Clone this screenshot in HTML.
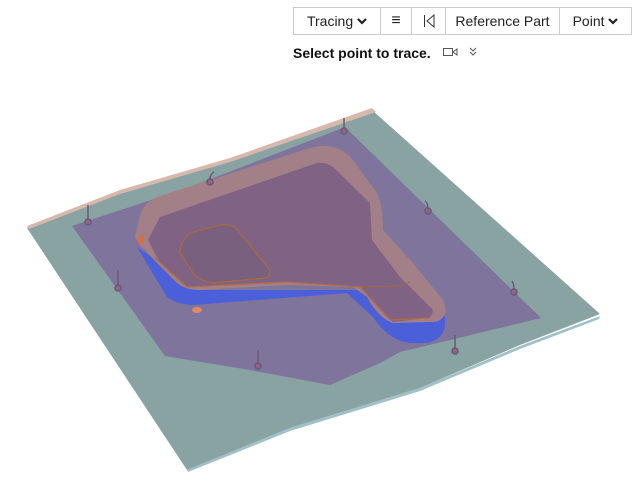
<!DOCTYPE html>
<html><head><style>
body{margin:0;width:635px;height:492px;background:#fff;font-family:"Liberation Sans",sans-serif;position:relative;overflow:hidden}
.tb{position:absolute;left:293px;top:7px;height:28px;display:flex;border:1px solid #ccc;box-sizing:border-box}
.tb div{border-right:1px solid #ccc;font-size:14px;color:#222;display:flex;align-items:center;justify-content:center;box-sizing:border-box}
.tb div:last-child{border-right:none}
.msg{position:absolute;left:293px;top:45px;font-size:14px;font-weight:bold;color:#111}
</style></head><body>
<svg width="635" height="492" style="position:absolute;left:0;top:0">
<path d="M27,228 L120,192 L230,160 L372,110 L600,314 L520,345 L420,388 L290,428 L187,470 Z" fill="#88a3a2"/>
<path d="M27,226 L120,190 L230,158 L372,108 L376,112 L230,162 L120,194 L29,229Z" fill="#d6b8ad"/>
<path d="M187,470 L290,428 L420,388 L520,346 L600,316 L599,319 L520,349 L420,391 L290,431 L188,472Z" fill="#9fc0c6"/>
<path d="M72,226 L190,187 L345,127 L541,318 L400,352 L380,363 L330,385 L250,370 L165,356 Z" fill="#7e749c"/>
<path d="M137,247 L167,297 Q178,305 193,305 L347,293 L373,317 Q388,340 410,343 L427,343 Q443,340 445,325 L445,313 L380,290 L200,290Z" fill="#4b5fd8"/>
<path d="M135,237 L140,215 Q145,200 163,195 L310,148 Q325,144 333,147 Q345,150 353,160 L377,193 Q383,205 383,230 L413,263 L443,300 Q447,310 445,315 Q440,322 433,322 L393,323 Q378,318 367,297 L353,287 L287,285 L200,290 Q185,290 177,283 L157,263 L140,245Z" fill="#a58086" opacity="0.95"/>
<path d="M148,240 L160,217 L317,163 Q327,162 333,167 L370,203 L372,240 L400,277 L433,310 Q432,317 428,318 L393,322 L360,287 L287,282 L187,287 L160,263Z" fill="#7f6284"/>
<path d="M360,287 L400,286 L410,282" stroke="#a4683f" stroke-width="1" fill="none"/>
<path d="M155,258 L187,287 L287,282 L360,287 L390,320 L430,318" stroke="#b06e45" stroke-width="1.2" fill="none"/>
<path d="M180,253 Q181,240 190,233 L220,225 Q230,224 235,227 L270,270 Q270,277 265,278 L213,283 Q198,280 193,273Z" fill="#79607f" stroke="#a9693f" stroke-width="1.3"/>
<ellipse cx="141" cy="240" rx="3" ry="5" fill="#d0704a"/>
<ellipse cx="197" cy="310" rx="5" ry="3" fill="#e08a66"/>
<g fill="#a0607a" stroke="#5e5e80" stroke-width="1.5">
<circle cx="344" cy="131" r="3"/><circle cx="210" cy="182" r="3"/><circle cx="88" cy="222" r="3"/><circle cx="428" cy="211" r="3"/><circle cx="118" cy="288" r="3"/><circle cx="514" cy="292" r="3"/><circle cx="258" cy="366" r="3"/><circle cx="455" cy="351" r="3"/>
</g>
<g stroke="#6b5876" stroke-width="1.5" fill="none">
<path d="M344,128 V118"/><path d="M210,180 q0,-6 4,-8"/><path d="M88,220 V205"/><path d="M428,209 q0,-6 -3,-8"/><path d="M118,286 V270"/><path d="M514,290 q0,-6 -2,-9"/><path d="M258,364 V350"/><path d="M455,349 V335"/>
</g>
<!-- message icons -->
<g stroke="#555" fill="none" stroke-width="1">
<rect x="443.5" y="48.5" width="9" height="7"/><path d="M453,52 L457,49 V55 Z"/>
<path d="M470,48 l3,3 l3,-3 M470,52 l3,3 l3,-3"/>
</g>
</svg>
<div class="tb">
<div style="width:87px">Tracing&nbsp;<svg width="10" height="8"><path d="M1,2 L5,6 L9,2" stroke="#222" stroke-width="2.2" fill="none"/></svg></div>
<div style="width:31px;font-size:16px">&#8801;</div>
<div style="width:34px"><svg width="12" height="14"><path d="M1.5,1 V13 M11,1 L4,7 L11,13 Z" stroke="#333" stroke-width="1" fill="none"/></svg></div>
<div style="width:114px">Reference Part</div>
<div style="width:71px">Point&nbsp;<svg width="10" height="8"><path d="M1,2 L5,6 L9,2" stroke="#222" stroke-width="2.2" fill="none"/></svg></div>
</div>
<div class="msg">Select point to trace.</div>
</body></html>
